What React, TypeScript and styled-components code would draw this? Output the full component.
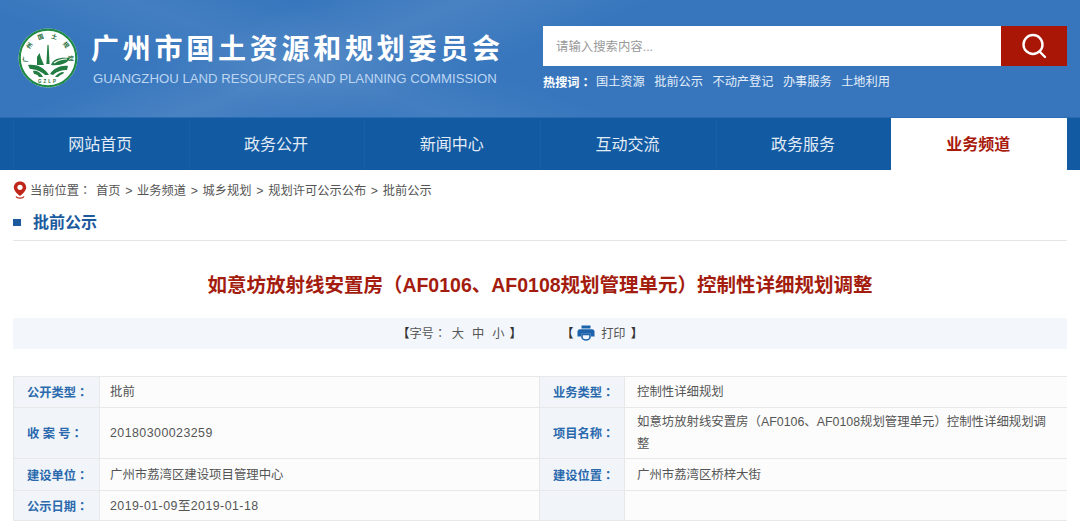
import React from "react";
import styled, { createGlobalStyle } from "styled-components";

const CJK = `"Liberation Sans", "Noto Sans CJK SC", sans-serif`;

const Global = createGlobalStyle`
  html, body { margin: 0; padding: 0; height: 531px; overflow: hidden; background: #fff; }
  * { box-sizing: border-box; }
  body { font-family: ${CJK}; }
`;

const Header = styled.header`
  height: 118px;
  display: flex;
  justify-content: space-between;
  background:
    linear-gradient(158deg, rgba(255,255,255,0) 0 22%, rgba(255,255,255,.09) 34%, rgba(255,255,255,0) 48%),
    linear-gradient(200deg, rgba(255,255,255,0) 0 56%, rgba(255,255,255,.06) 68%, rgba(255,255,255,0) 80%),
    #3776bd;
  border-bottom: 1px solid #2a6cb4;
`;
const Brand = styled.div`
  display: flex;
  align-items: flex-start;
  padding: 28px 0 0 18px;
  gap: 13px;
`;
const BrandText = styled.div`
  display: flex;
  flex-direction: column;
  padding-top: 4px;
`;
const BrandTitle = styled.h1`
  margin: 0;
  font-size: 28px;
  line-height: 36px;
  font-weight: 700;
  color: #fff;
  letter-spacing: 3.75px;
  white-space: nowrap;
`;
const BrandSub = styled.div`
  font-size: 13.2px;
  line-height: 16px;
  margin: 3px 0 0 2px;
  color: #bcd6f2;
  white-space: nowrap;
`;
const SearchArea = styled.div`
  width: 537px;
  padding: 26px 13px 0 0;
`;
const SearchBox = styled.div`
  display: flex;
  height: 40px;
  width: 524px;
`;
const SearchInput = styled.div`
  flex: 1;
  background: #fff;
  color: #999;
  font-size: 12.4px;
  line-height: 42px;
  padding-left: 13px;
`;
const SearchBtn = styled.div`
  width: 66px;
  background: #a91606;
  display: flex;
  align-items: center;
  justify-content: center;
`;
const HotRow = styled.div`
  display: flex;
  margin-top: 8px;
  font-size: 12.2px;
  line-height: 16px;
  color: #e4eefa;
  gap: 9.5px;
  white-space: nowrap;
`;
const HotLabel = styled.b`
  color: #fff;
  width: 43.5px;
`;

const Nav = styled.nav`
  height: 52px;
  background: #125aa2;
  display: flex;
  padding-left: 13px;
`;
const NavItem = styled.div<{ $active?: boolean }>`
  width: 175.7px;
  padding-right: 2px;
  text-align: center;
  font-size: 16px;
  line-height: 53px;
  color: ${(p) => (p.$active ? "#a81a0b" : "#e2ecf6")};
  font-weight: ${(p) => (p.$active ? 700 : 400)};
  background: ${(p) => (p.$active ? "#fff" : "transparent")};
  border-left: ${(p) => (p.$active ? "none" : "1px solid #1a5fa5")};
`;

const Content = styled.main`
  padding: 0 13px;
`;
const Crumbs = styled.div`
  display: flex;
  align-items: center;
  height: 40px;
  padding-bottom: 1px;
  font-size: 12.25px;
  color: #555;
  white-space: nowrap;
  gap: 3px;
`;
const CrumbText = styled.span`
  word-spacing: 1.3px;
`;
const Colon = styled.span`
  font-family: "Noto Sans CJK TC", sans-serif;
`;
const SectionTitle = styled.h2`
  margin: 0;
  height: 31px;
  display: flex;
  align-items: flex-start;
  gap: 12px;
  font-size: 16px;
  line-height: 25px;
  font-weight: 700;
  color: #1c5a9e;
  border-bottom: 1px solid #e6e6e6;
`;
const Square = styled.i`
  display: block;
  width: 8px;
  height: 7px;
  margin-top: 9px;
  background: #1c5a9e;
`;
const DocTitle = styled.h3`
  margin: 0;
  height: 77px;
  line-height: 88px;
  text-align: center;
  font-size: 19.5px;
  font-weight: 700;
  color: #a31c0e;
  white-space: nowrap;
`;
const Tools = styled.div`
  height: 31px;
  background: #f3f7fb;
  display: flex;
  align-items: center;
  justify-content: center;
  font-size: 12.25px;
  color: #555;
  gap: 39.5px;
  padding: 0 40px 2px 0;
`;
const ToolGroup = styled.div`
  display: flex;
  align-items: center;
  white-space: nowrap;
`;
const Bracket = styled.b`
  color: #333;
`;
const BracketEnd = styled(Bracket)`
  margin-left: 5px;
`;
const FontSize = styled.span`
  margin-left: 8px;
`;
const ToolText = styled.span`
  margin-right: -2.5px;
`;
const PrintIcon = styled.span`
  display: flex;
  margin: 0 6px 0 3.75px;
`;

const Table = styled.div`
  margin-top: 27px;
  display: grid;
  grid-template-columns: 86px 440px 85px 443px;
  grid-template-rows: 31px 51px 32px 30px;
  border-top: 1px solid #e8e8e8;
  border-right: 1px solid #e8e8e8;
`;
const Label = styled.div`
  background: #f1f5f9;
  color: #2a69ad;
  font-size: 12.25px;
  font-weight: 700;
  display: flex;
  align-items: center;
  padding-left: 13px;
  border-bottom: 1px solid #e8e8e8;
  border-left: 1px solid #e8e8e8;
  white-space: pre;
`;
const Value = styled.div<{ $right?: boolean; $digits?: boolean }>`
  background: #fcfcfc;
  color: #555;
  font-size: 12.4px;
  line-height: 22px;
  display: flex;
  align-items: center;
  padding: 0 12px 0 ${(p) => (p.$right ? 12 : 10)}px;
  letter-spacing: ${(p) => (p.$digits ? 0.45 : 0)}px;
  border-bottom: 1px solid #e8e8e8;
  border-left: 1px solid #e8e8e8;
`;

const Logo = () => (
  <svg width="60" height="60" viewBox="0 0 60 60">
    <circle cx="30" cy="30" r="29.5" fill="#fff" />
    <circle cx="30" cy="30" r="28.3" fill="none" stroke="#1f8a45" strokeWidth="2.2" />
    <defs>
      <path id="ring" d="M10 35 A20.5 20.5 0 1 1 50 35" />
    </defs>
    <text fontSize="6" fontWeight="700" fill="#1b6b38" fontFamily={CJK}>
      <textPath href="#ring" startOffset="1" textLength="70" lengthAdjust="spacing">广州国土规划</textPath>
    </text>
    <path d="M29.4 17 L30.6 17 L31.6 36 H28.4 Z" fill="#237d43" />
    <path d="M19 37 V29 L21.5 25 L23 30 L26 37 Z" fill="#237d43" />
    <path d="M33 37 C35 31 41 29 52 30 C50 35 43 38 33 37 Z" fill="#237d43" />
    <path d="M36 35 C40 32 44 31 49 31" stroke="#fff" strokeWidth="1.2" fill="none" />
    <path d="M10 37 C18 36 26 39 31 47 L27 47 C23 43 16 41 12 41 Z" fill="#237d43" />
    <path d="M15 43 C19 42 23 45 25 49 L21 49 C20 47 18 46 16 46 Z" fill="#237d43" />
    <path d="M50 38 C43 37 36 40 32 46 L35 47 C39 43 45 42 49 42 Z" fill="#237d43" />
    <path d="M46 44 C42 44 39 46 37 49 L40 49 C42 47 44 46 45 46 Z" fill="#237d43" />
    <text x="30" y="55" textAnchor="middle" fontSize="4.5" fontWeight="700" letterSpacing="2" fill="#1b6b38">GZLP</text>
  </svg>
);

const Pin = () => (
  <svg width="14" height="18" viewBox="0 0 14 18">
    <path d="M7 0.5 C3.2 0.5 0.8 3.2 0.8 6.4 C0.8 10 5 13 7 15 C9 13 13.2 10 13.2 6.4 C13.2 3.2 10.8 0.5 7 0.5 Z" fill="#bf2518" />
    <circle cx="7" cy="6.3" r="2.6" fill="#fff" />
    <path d="M3 15.5 C4 17.6 10 17.6 11 15.5" stroke="#bf2518" strokeWidth="1.2" fill="none" />
  </svg>
);

const Printer = () => (
  <svg width="18" height="16" viewBox="0 0 18 16">
    <path d="M4.5 0.5 H13.5 V3.5 H4.5 Z" fill="#1c63ac" />
    <path d="M3 4.2 H15 A2.5 2.5 0 0 1 17.5 6.7 V11.5 H14 V8.8 H4 V11.5 H0.5 V6.7 A2.5 2.5 0 0 1 3 4.2 Z" fill="#1c63ac" />
    <path d="M5 9.5 H13 V12 C13 13.8 11 15 9 15 C7 15 5 13.8 5 12 Z" fill="none" stroke="#1c63ac" strokeWidth="1.6" />
  </svg>
);

const Magnifier = () => (
  <svg width="26" height="26" viewBox="0 0 26 26" fill="none" stroke="#fff" strokeWidth="2.4">
    <circle cx="12" cy="11.5" r="9.5" />
    <path d="M18.5 18.5 L24 24" strokeLinecap="round" />
  </svg>
);

const navs = ["网站首页", "政务公开", "新闻中心", "互动交流", "政务服务", "业务频道"];
const hot = ["国土资源", "批前公示", "不动产登记", "办事服务", "土地利用"];

export default function App() {
  return (
    <>
      <Global />
      <Header>
        <Brand>
          <Logo />
          <BrandText>
            <BrandTitle>广州市国土资源和规划委员会</BrandTitle>
            <BrandSub>GUANGZHOU LAND RESOURCES AND PLANNING COMMISSION</BrandSub>
          </BrandText>
        </Brand>
        <SearchArea>
          <SearchBox>
            <SearchInput>请输入搜索内容...</SearchInput>
            <SearchBtn><Magnifier /></SearchBtn>
          </SearchBox>
          <HotRow>
            <HotLabel>热搜词<Colon>：</Colon></HotLabel>
            {hot.map((h) => <span key={h}>{h}</span>)}
          </HotRow>
        </SearchArea>
      </Header>
      <Nav>
        {navs.map((n, i) => <NavItem key={n} $active={i === 5}>{n}</NavItem>)}
      </Nav>
      <Content>
        <Crumbs>
          <Pin />
          <CrumbText>当前位置<Colon>：</Colon> 首页 &gt; 业务频道 &gt; 城乡规划 &gt; 规划许可公示公布 &gt; 批前公示</CrumbText>
        </Crumbs>
        <SectionTitle><Square />批前公示</SectionTitle>
        <DocTitle>如意坊放射线安置房（AF0106、AF0108规划管理单元）控制性详细规划调整</DocTitle>
        <Tools>
          <ToolGroup>
            <Bracket>【</Bracket>
            <ToolText>字号<Colon>：</Colon></ToolText>
            <FontSize>大</FontSize><FontSize>中</FontSize><FontSize>小</FontSize>
            <BracketEnd>】</BracketEnd>
          </ToolGroup>
          <ToolGroup>
            <Bracket>【</Bracket>
            <PrintIcon><Printer /></PrintIcon>
            打印
            <BracketEnd>】</BracketEnd>
          </ToolGroup>
        </Tools>
        <Table>
          <Label>公开类型<Colon>：</Colon></Label>
          <Value>批前</Value>
          <Label>业务类型<Colon>：</Colon></Label>
          <Value $right>控制性详细规划</Value>
          <Label>收 案 号<Colon>：</Colon></Label>
          <Value $digits>20180300023259</Value>
          <Label>项目名称<Colon>：</Colon></Label>
          <Value $right>如意坊放射线安置房（AF0106、AF0108规划管理单元）控制性详细规划调整</Value>
          <Label>建设单位<Colon>：</Colon></Label>
          <Value>广州市荔湾区建设项目管理中心</Value>
          <Label>建设位置<Colon>：</Colon></Label>
          <Value $right>广州市荔湾区桥梓大街</Value>
          <Label>公示日期<Colon>：</Colon></Label>
          <Value $digits>2019-01-09至2019-01-18</Value>
          <Label />
          <Value $right />
        </Table>
      </Content>
    </>
  );
}
